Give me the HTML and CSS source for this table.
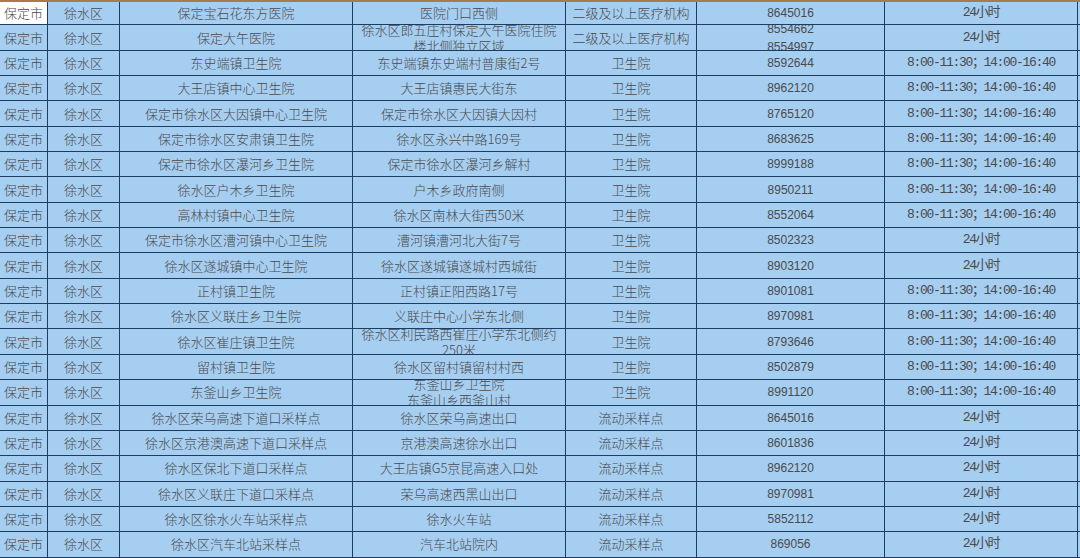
FILE: index.html
```html
<!DOCTYPE html>
<html lang="zh-CN">
<head>
<meta charset="utf-8">
<title>徐水区核酸采样点</title>
<link rel="stylesheet" href="styles.css">
</head>
<body>
<div class="sheet">
  <div class="row first">
    <div class="c c1 sel">保定市</div><div class="c c2">徐水区</div><div class="c c3">保定宝石花东方医院</div><div class="c c4">医院门口西侧</div><div class="c c5">二级及以上医疗机构</div><div class="c c6">8645016</div><div class="c c7 t">24小时</div><div class="c c8"></div>
  </div>
  <div class="row">
    <div class="c c1">保定市</div><div class="c c2">徐水区</div><div class="c c3">保定大午医院</div><div class="c c4">徐水区郎五庄村保定大午医院住院楼北侧独立区域</div><div class="c c5">二级及以上医疗机构</div><div class="c c6">8554662<br>8554997</div><div class="c c7 t">24小时</div><div class="c c8"></div>
  </div>
  <div class="row">
    <div class="c c1">保定市</div><div class="c c2">徐水区</div><div class="c c3">东史端镇卫生院</div><div class="c c4">东史端镇东史端村普康街2号</div><div class="c c5">卫生院</div><div class="c c6">8592644</div><div class="c c7 t">8:00-11:30；14:00-16:40</div><div class="c c8"></div>
  </div>
  <div class="row">
    <div class="c c1">保定市</div><div class="c c2">徐水区</div><div class="c c3">大王店镇中心卫生院</div><div class="c c4">大王店镇惠民大街东</div><div class="c c5">卫生院</div><div class="c c6">8962120</div><div class="c c7 t">8:00-11:30；14:00-16:40</div><div class="c c8"></div>
  </div>
  <div class="row">
    <div class="c c1">保定市</div><div class="c c2">徐水区</div><div class="c c3">保定市徐水区大因镇中心卫生院</div><div class="c c4">保定市徐水区大因镇大因村</div><div class="c c5">卫生院</div><div class="c c6">8765120</div><div class="c c7 t">8:00-11:30；14:00-16:40</div><div class="c c8"></div>
  </div>
  <div class="row">
    <div class="c c1">保定市</div><div class="c c2">徐水区</div><div class="c c3">保定市徐水区安肃镇卫生院</div><div class="c c4">徐水区永兴中路169号</div><div class="c c5">卫生院</div><div class="c c6">8683625</div><div class="c c7 t">8:00-11:30；14:00-16:40</div><div class="c c8"></div>
  </div>
  <div class="row">
    <div class="c c1">保定市</div><div class="c c2">徐水区</div><div class="c c3">保定市徐水区瀑河乡卫生院</div><div class="c c4">保定市徐水区瀑河乡解村</div><div class="c c5">卫生院</div><div class="c c6">8999188</div><div class="c c7 t">8:00-11:30；14:00-16:40</div><div class="c c8"></div>
  </div>
  <div class="row">
    <div class="c c1">保定市</div><div class="c c2">徐水区</div><div class="c c3">徐水区户木乡卫生院</div><div class="c c4">户木乡政府南侧</div><div class="c c5">卫生院</div><div class="c c6">8950211</div><div class="c c7 t">8:00-11:30；14:00-16:40</div><div class="c c8"></div>
  </div>
  <div class="row">
    <div class="c c1">保定市</div><div class="c c2">徐水区</div><div class="c c3">高林村镇中心卫生院</div><div class="c c4">徐水区南林大街西50米</div><div class="c c5">卫生院</div><div class="c c6">8552064</div><div class="c c7 t">8:00-11:30；14:00-16:40</div><div class="c c8"></div>
  </div>
  <div class="row">
    <div class="c c1">保定市</div><div class="c c2">徐水区</div><div class="c c3">保定市徐水区漕河镇中心卫生院</div><div class="c c4">漕河镇漕河北大街7号</div><div class="c c5">卫生院</div><div class="c c6">8502323</div><div class="c c7 t">24小时</div><div class="c c8"></div>
  </div>
  <div class="row">
    <div class="c c1">保定市</div><div class="c c2">徐水区</div><div class="c c3">徐水区遂城镇中心卫生院</div><div class="c c4">徐水区遂城镇遂城村西城街</div><div class="c c5">卫生院</div><div class="c c6">8903120</div><div class="c c7 t">24小时</div><div class="c c8"></div>
  </div>
  <div class="row">
    <div class="c c1">保定市</div><div class="c c2">徐水区</div><div class="c c3">正村镇卫生院</div><div class="c c4">正村镇正阳西路17号</div><div class="c c5">卫生院</div><div class="c c6">8901081</div><div class="c c7 t">8:00-11:30；14:00-16:40</div><div class="c c8"></div>
  </div>
  <div class="row">
    <div class="c c1">保定市</div><div class="c c2">徐水区</div><div class="c c3">徐水区义联庄乡卫生院</div><div class="c c4">义联庄中心小学东北侧</div><div class="c c5">卫生院</div><div class="c c6">8970981</div><div class="c c7 t">8:00-11:30；14:00-16:40</div><div class="c c8"></div>
  </div>
  <div class="row">
    <div class="c c1">保定市</div><div class="c c2">徐水区</div><div class="c c3">徐水区崔庄镇卫生院</div><div class="c c4">徐水区利民路西崔庄小学东北侧约250米</div><div class="c c5">卫生院</div><div class="c c6">8793646</div><div class="c c7 t">8:00-11:30；14:00-16:40</div><div class="c c8"></div>
  </div>
  <div class="row">
    <div class="c c1">保定市</div><div class="c c2">徐水区</div><div class="c c3">留村镇卫生院</div><div class="c c4">徐水区留村镇留村村西</div><div class="c c5">卫生院</div><div class="c c6">8502879</div><div class="c c7 t">8:00-11:30；14:00-16:40</div><div class="c c8"></div>
  </div>
  <div class="row">
    <div class="c c1">保定市</div><div class="c c2">徐水区</div><div class="c c3">东釜山乡卫生院</div><div class="c c4">东釜山乡卫生院<br>东釜山乡西釜山村</div><div class="c c5">卫生院</div><div class="c c6">8991120</div><div class="c c7 t">8:00-11:30；14:00-16:40</div><div class="c c8"></div>
  </div>
  <div class="row">
    <div class="c c1">保定市</div><div class="c c2">徐水区</div><div class="c c3">徐水区荣乌高速下道口采样点</div><div class="c c4">徐水区荣乌高速出口</div><div class="c c5">流动采样点</div><div class="c c6">8645016</div><div class="c c7 t">24小时</div><div class="c c8"></div>
  </div>
  <div class="row">
    <div class="c c1">保定市</div><div class="c c2">徐水区</div><div class="c c3">徐水区京港澳高速下道口采样点</div><div class="c c4">京港澳高速徐水出口</div><div class="c c5">流动采样点</div><div class="c c6">8601836</div><div class="c c7 t">24小时</div><div class="c c8"></div>
  </div>
  <div class="row">
    <div class="c c1">保定市</div><div class="c c2">徐水区</div><div class="c c3">徐水区保北下道口采样点</div><div class="c c4">大王店镇G5京昆高速入口处</div><div class="c c5">流动采样点</div><div class="c c6">8962120</div><div class="c c7 t">24小时</div><div class="c c8"></div>
  </div>
  <div class="row">
    <div class="c c1">保定市</div><div class="c c2">徐水区</div><div class="c c3">徐水区义联庄下道口采样点</div><div class="c c4">荣乌高速西黑山出口</div><div class="c c5">流动采样点</div><div class="c c6">8970981</div><div class="c c7 t">24小时</div><div class="c c8"></div>
  </div>
  <div class="row">
    <div class="c c1">保定市</div><div class="c c2">徐水区</div><div class="c c3">徐水区徐水火车站采样点</div><div class="c c4">徐水火车站</div><div class="c c5">流动采样点</div><div class="c c6">5852112</div><div class="c c7 t">24小时</div><div class="c c8"></div>
  </div>
  <div class="row last">
    <div class="c c1">保定市</div><div class="c c2">徐水区</div><div class="c c3">徐水区汽车北站采样点</div><div class="c c4">汽车北站院内</div><div class="c c5">流动采样点</div><div class="c c6">869056</div><div class="c c7 t">24小时</div><div class="c c8"></div>
  </div>
</div>
</body>
</html>
```
FILE: styles.css
```css
html, body {
  margin: 0;
  padding: 0;
  background: #e6e6e6;
  overflow: hidden;
}

.sheet {
  width: 1080px;
  border-top: 2px solid #a87b48;
  font-family: "Noto Sans CJK SC", "Liberation Sans", sans-serif;
  font-size: 13px;
  font-weight: 300;
  color: #4a4a4a;
}

.row {
  display: grid;
  grid-template-columns: 48px 72px 233px 213px 131px 188px 193px 2px;
  height: 25.35px;
  box-sizing: border-box;
  border-bottom: 1px solid #1e3d63;
  background: #a6cef1;
}

.row.first {
  height: 23.35px;
}

.c {
  display: flex;
  align-items: center;
  justify-content: center;
  text-align: center;
  overflow: hidden;
  box-sizing: border-box;
  border-right: 1px solid #1e3d63;
  line-height: 16px;
  white-space: normal;
}

.c1 {
  justify-content: flex-start;
  padding-left: 4px;
  white-space: nowrap;
}

.c4 {
  padding: 0 8px;
}

.c6 {
  font-family: "Liberation Sans", "Noto Sans CJK SC", sans-serif;
  font-weight: 400;
  font-size: 12px;
  line-height: 18px;
}

.t {
  font-family: "Liberation Mono", "Noto Sans CJK SC", monospace;
  font-weight: 400;
  font-size: 13px;
  letter-spacing: -1.3px;
  white-space: nowrap;
}

.c8 {
  border-right: none;
}

.sel {
  background: #ffffff;
}
```
